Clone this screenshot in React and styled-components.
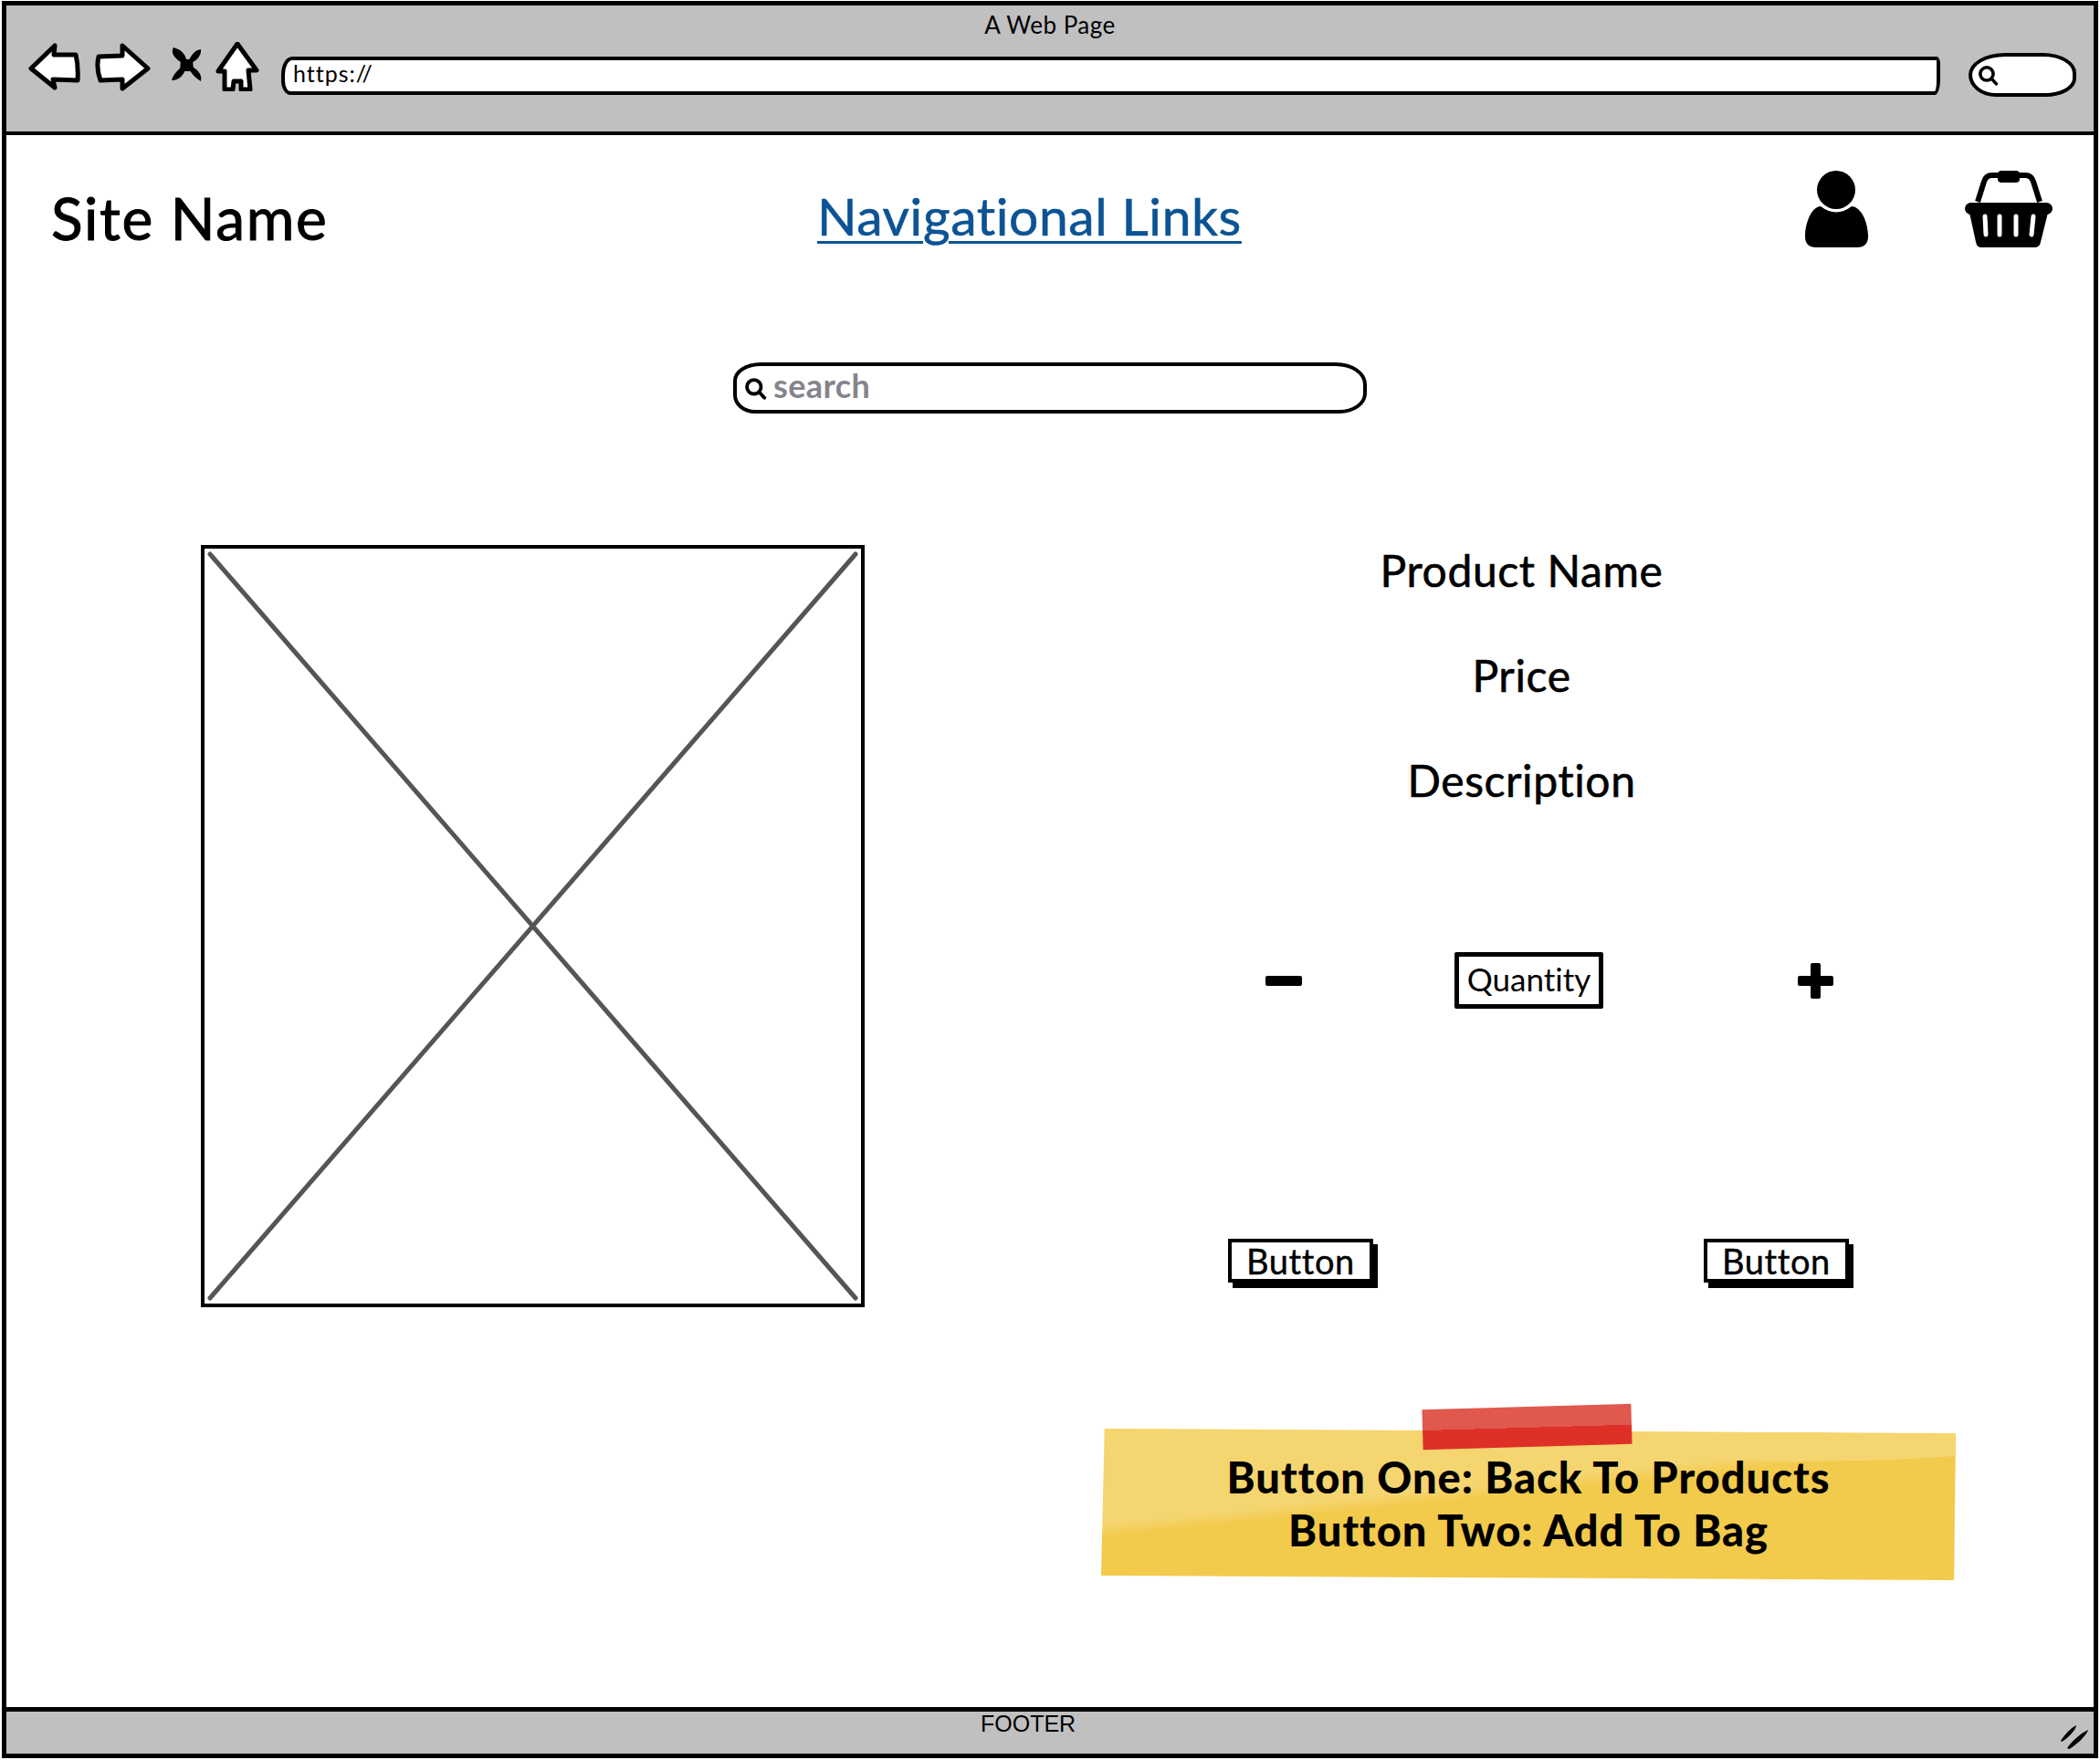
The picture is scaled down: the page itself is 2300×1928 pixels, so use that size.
import styled, { createGlobalStyle } from 'styled-components'

const GlobalStyle = createGlobalStyle`
  html, body {
    margin: 0;
    background: #fff;
  }
`

const App = () => (
  <>
    <GlobalStyle />
    <Window>
      <TopBar>
        <PageTitle>A Web Page</PageTitle>
        <Toolbar>
          <NavIcons>
            <BackIcon />
            <ForwardIcon />
            <StopIcon />
            <HomeIcon />
          </NavIcons>
          <UrlBar>https://</UrlBar>
          <MiniSearch>
            <SearchGlyph size={23} />
          </MiniSearch>
        </Toolbar>
      </TopBar>

      <Header>
        <SiteName>Site Name</SiteName>
        <NavLink href="#">Navigational Links</NavLink>
        <HeaderIcons>
          <UserIcon />
          <BasketIcon />
        </HeaderIcons>
      </Header>

      <SearchBox>
        <SearchGlyph size={25} />
        <SearchText>search</SearchText>
      </SearchBox>

      <Main>
        <Placeholder>
          <PlaceholderCross viewBox="0 0 719 827" preserveAspectRatio="none">
            <line x1="6" y1="6" x2="713" y2="821" />
            <line x1="713" y1="6" x2="6" y2="821" />
          </PlaceholderCross>
        </Placeholder>

        <Details>
          <InfoList>
            <InfoLine>Product Name</InfoLine>
            <InfoLine>Price</InfoLine>
            <InfoLine>Description</InfoLine>
          </InfoList>

          <QuantityRow>
            <Minus />
            <QuantityBox>Quantity</QuantityBox>
            <Plus />
          </QuantityRow>

          <ButtonRow>
            <SketchButton>Button</SketchButton>
            <SketchButton>Button</SketchButton>
          </ButtonRow>

          <Note>
            <Tape />
            <NotePaper>
              Button One: Back To Products
              <br />
              Button Two: Add To Bag
            </NotePaper>
          </Note>
        </Details>
      </Main>

      <Footer>
        <FooterText>FOOTER</FooterText>
        <GripIcon />
      </Footer>
    </Window>
  </>
)

const BackIcon = () => (
  <OutlineIcon width="73" height="54" viewBox="31 46 73 54">
    <path d="M34 75 L60 50 L59 60 L83 60 Q86 72 85 88 L58 87 L60 96 Z" />
  </OutlineIcon>
)

const ForwardIcon = () => (
  <OutlineIcon width="83" height="54" viewBox="104 46 83 54">
    <path d="M108 62 L134 61 L134 50 L162 75 L134 97 L134 87 L110 88 Q105 75 108 62 Z" />
  </OutlineIcon>
)

const StopIcon = () => (
  <FilledIcon width="49" height="54" viewBox="187 46 49 54">
    <path d="M204 71 C192 66 186 58 190 52 C199 54 206 62 204 71 Z" />
    <path d="M204 71 C209 62 212 55 220 54 C221 62 214 68 204 71 Z" />
    <path d="M204 71 C197 74 190 80 188 88 C197 88 203 81 204 71 Z" />
    <path d="M204 71 C208 78 213 85 220 89 C222 80 214 73 204 71 Z" />
    <path d="M198 65 L211 65 L212 78 L197 78 Z" />
  </FilledIcon>
)

const HomeIcon = () => (
  <OutlineIcon width="72" height="54" viewBox="236 46 72 54">
    <path d="M260 48 L281 77 L272 77 L274 98 L264 98 L264 89 L256 89 L255 98 L246 98 L246 78 L239 78 Z" />
  </OutlineIcon>
)

const SearchGlyph = ({ size }) => (
  <SearchSvg width={size} height={size} viewBox="0 0 22 22">
    <circle cx="9.5" cy="9.5" r="6.8" />
    <line x1="14.5" y1="14.5" x2="19.5" y2="20" />
  </SearchSvg>
)

const UserIcon = () => (
  <FilledIcon width="69" height="84" viewBox="1977 186 69 84">
    <circle cx="2011" cy="207" r="21" />
    <path d="M1994 225 Q2011 238 2028 225 C2040 226 2046 245 2046 258 Q2046 270 2034 270 L1989 270 Q1977 270 1977 258 C1977 245 1983 226 1994 225 Z" />
  </FilledIcon>
)

const BasketIcon = () => (
  <BasketSvg width="96" height="84" viewBox="2152 186 96 84">
    <path className="handle" d="M2166 220 L2173 198 Q2175 191 2182 191 L2218 191 Q2225 191 2227 198 L2234 220" />
    <rect x="2188" y="186" width="24" height="13" rx="4" />
    <rect x="2152" y="221" width="96" height="13" rx="6.5" />
    <path d="M2157 232 L2243 232 L2235 264 Q2234 270 2228 270 L2170 270 Q2165 270 2164 264 Z" />
    <path className="slat" d="M2174 236 L2175 256 M2190 236 L2190 256 M2208 236 L2208 256 M2227 236 L2225 256" />
  </BasketSvg>
)

const GripIcon = () => (
  <GripSvg width="32" height="28" viewBox="0 0 32 28">
    <path d="M1 18 C6 10 13 3 18 1 C18 6 8 16 2 19 Z" />
    <path d="M8 26 C13 18 24 9 31 6 C30 11 18 23 10 27 Z" />
  </GripSvg>
)

const Window = styled.div`
  box-sizing: border-box;
  display: flex;
  flex-direction: column;
  width: 2296px;
  height: 1925px;
  margin: 1px 0 0 2px;
  border: 5px solid #000;
  background: #fff;
  color: #000;
  font-family: Lato, 'Noto Sans', sans-serif;
  font-variant-ligatures: none;
`

const TopBar = styled.div`
  box-sizing: border-box;
  height: 142px;
  padding: 9px 19px 0 24px;
  background: #c0c0c0;
  border-bottom: 4px solid #000;
`

const PageTitle = styled.div`
  height: 31px;
  margin-left: -24px;
  margin-right: -19px;
  text-align: center;
  font-size: 26px;
  letter-spacing: 0.5px;
  line-height: 24px;
`

const Toolbar = styled.div`
  display: flex;
  align-items: flex-start;
`

const NavIcons = styled.div`
  display: flex;
  width: 277px;
`

const OutlineIcon = styled.svg`
  flex: none;

  path {
    fill: #fff;
    stroke: #000;
    stroke-width: 5;
    stroke-linejoin: round;
  }
`

const FilledIcon = styled.svg`
  flex: none;
  fill: #000;
`

const UrlBar = styled.div`
  box-sizing: border-box;
  flex: 1;
  height: 42px;
  margin-top: 16px;
  padding-left: 9px;
  background: #fff;
  border: 4px solid #000;
  border-radius: 12px 4px 6px 10px / 20px 8px 16px 16px;
  font-size: 25px;
  letter-spacing: 1px;
  line-height: 29px;
`

const MiniSearch = styled.div`
  box-sizing: border-box;
  display: flex;
  align-items: center;
  width: 118px;
  height: 48px;
  margin: 12px 0 0 31px;
  padding-left: 6px;
  background: #fff;
  border: 4px solid #000;
  border-radius: 40px 36px 34px 30px / 24px 22px 20px 24px;
`

const SearchSvg = styled.svg`
  flex: none;
  fill: none;
  stroke: #000;
  stroke-width: 3.4;
  stroke-linecap: round;
`

const Header = styled.header`
  display: grid;
  grid-template-columns: 839px auto 1fr;
  align-items: center;
  height: 84px;
  padding: 39px 45px 0 49px;
`

const SiteName = styled.div`
  margin-top: 20px;
  font-size: 64px;
  letter-spacing: 1.6px;
  line-height: 60px;
  -webkit-text-stroke: 1px #000;
`

const NavLink = styled.a`
  margin-top: 14px;
  color: #0b5394;
  font-size: 57px;
  letter-spacing: 0.6px;
  line-height: 70px;
  text-decoration: underline;
  text-decoration-thickness: 3px;
  text-underline-offset: 6px;
  -webkit-text-stroke: 0.6px #0b5394;
`

const HeaderIcons = styled.div`
  display: flex;
  justify-content: flex-end;
  gap: 106px;
`

const BasketSvg = styled.svg`
  flex: none;
  fill: #000;

  .handle {
    fill: none;
    stroke: #000;
    stroke-width: 6;
  }

  .slat {
    fill: none;
    stroke: #fff;
    stroke-width: 5;
    stroke-linecap: round;
  }
`

const SearchBox = styled.div`
  box-sizing: border-box;
  display: flex;
  align-items: center;
  gap: 7px;
  width: 694px;
  height: 56px;
  margin: 126px auto 0;
  padding-left: 8px;
  border: 4px solid #000;
  border-radius: 30px 34px 30px 24px / 20px 24px 22px 20px;
`

const SearchText = styled.span`
  margin-top: -6px;
  color: #84848c;
  font-size: 36px;
  font-weight: 700;
  letter-spacing: 0.4px;
`

const Main = styled.main`
  display: grid;
  grid-template-columns: 727px 950px;
  column-gap: 246px;
  align-items: start;
  margin-top: 144px;
  padding-left: 213px;
`

const Placeholder = styled.div`
  box-sizing: border-box;
  position: relative;
  height: 835px;
  border: 4px solid #000;
`

const PlaceholderCross = styled.svg`
  position: absolute;
  inset: 0;
  width: 100%;
  height: 100%;

  line {
    stroke: #555;
    stroke-width: 5;
    stroke-linecap: round;
  }
`

const Details = styled.div`
  display: flex;
  flex-direction: column;
`

const InfoList = styled.div`
  display: flex;
  flex-direction: column;
  gap: 59px;
`

const InfoLine = styled.div`
  margin-left: -3px;
  text-align: center;
  font-size: 48px;
  letter-spacing: 0.6px;
  line-height: 56px;
  -webkit-text-stroke: 0.6px #000;
`

const QuantityRow = styled.div`
  display: grid;
  grid-template-columns: 207px 376px auto;
  align-items: center;
  margin-top: 160px;
  padding-left: 193px;
`

const Minus = styled.div`
  width: 40px;
  height: 11px;
  background: #000;
  border-radius: 2px;
`

const Plus = styled.div`
  position: relative;
  width: 39px;
  height: 39px;

  &::before,
  &::after {
    content: '';
    position: absolute;
    background: #000;
    border-radius: 2px;
  }

  &::before {
    left: 0;
    right: 0;
    top: 14px;
    height: 11px;
  }

  &::after {
    top: 0;
    bottom: 0;
    left: 14px;
    width: 11px;
  }
`

const QuantityBox = styled.div`
  box-sizing: border-box;
  width: 163px;
  height: 62px;
  border: 5px solid #000;
  border-radius: 2px;
  text-align: center;
  font-size: 35px;
  line-height: 48px;
`

const ButtonRow = styled.div`
  display: flex;
  gap: 362px;
  margin-top: 252px;
  padding-left: 152px;
`

const SketchButton = styled.button`
  box-sizing: border-box;
  width: 159px;
  height: 48px;
  padding: 0;
  background: #fff;
  color: #000;
  border: 4px solid #000;
  box-shadow: 5px 6px 0 #000;
  font-family: inherit;
  font-size: 38px;
  letter-spacing: 0.6px;
  line-height: 38px;
  -webkit-text-stroke: 0.4px #000;
`

const Note = styled.div`
  position: relative;
  width: 936px;
  margin: 160px 0 0 13px;
`

const Tape = styled.div`
  position: absolute;
  z-index: 1;
  top: -24px;
  left: 352px;
  width: 229px;
  height: 44px;
  background: linear-gradient(#e0584e 0 52%, #de3027 52% 100%);
  transform: rotate(-1.6deg);
`

const NotePaper = styled.div`
  box-sizing: border-box;
  height: 166px;
  padding-top: 24px;
  background:
    radial-gradient(ellipse 220px 16px at 82% 12%, #f5d56f 97%, transparent),
    linear-gradient(174deg, #f5d56f 40%, #f2ca4c 45%);
  clip-path: polygon(0.4% 0, 100% 3%, 99.8% 100%, 0 97%);
  text-align: center;
  font-size: 47px;
  font-weight: 900;
  letter-spacing: 1px;
  line-height: 58px;
`

const Footer = styled.footer`
  box-sizing: border-box;
  display: flex;
  align-items: center;
  height: 51px;
  margin-top: auto;
  padding: 0 5px 0 1067px;
  background: #c0c0c0;
  border-top: 5px solid #000;
`

const FooterText = styled.div`
  margin-bottom: 20px;
  font-family: 'Liberation Sans', sans-serif;
  font-size: 25px;
`

const GripSvg = styled.svg`
  flex: none;
  margin: 10px 0 0 auto;
  fill: #000;
`

export default App
